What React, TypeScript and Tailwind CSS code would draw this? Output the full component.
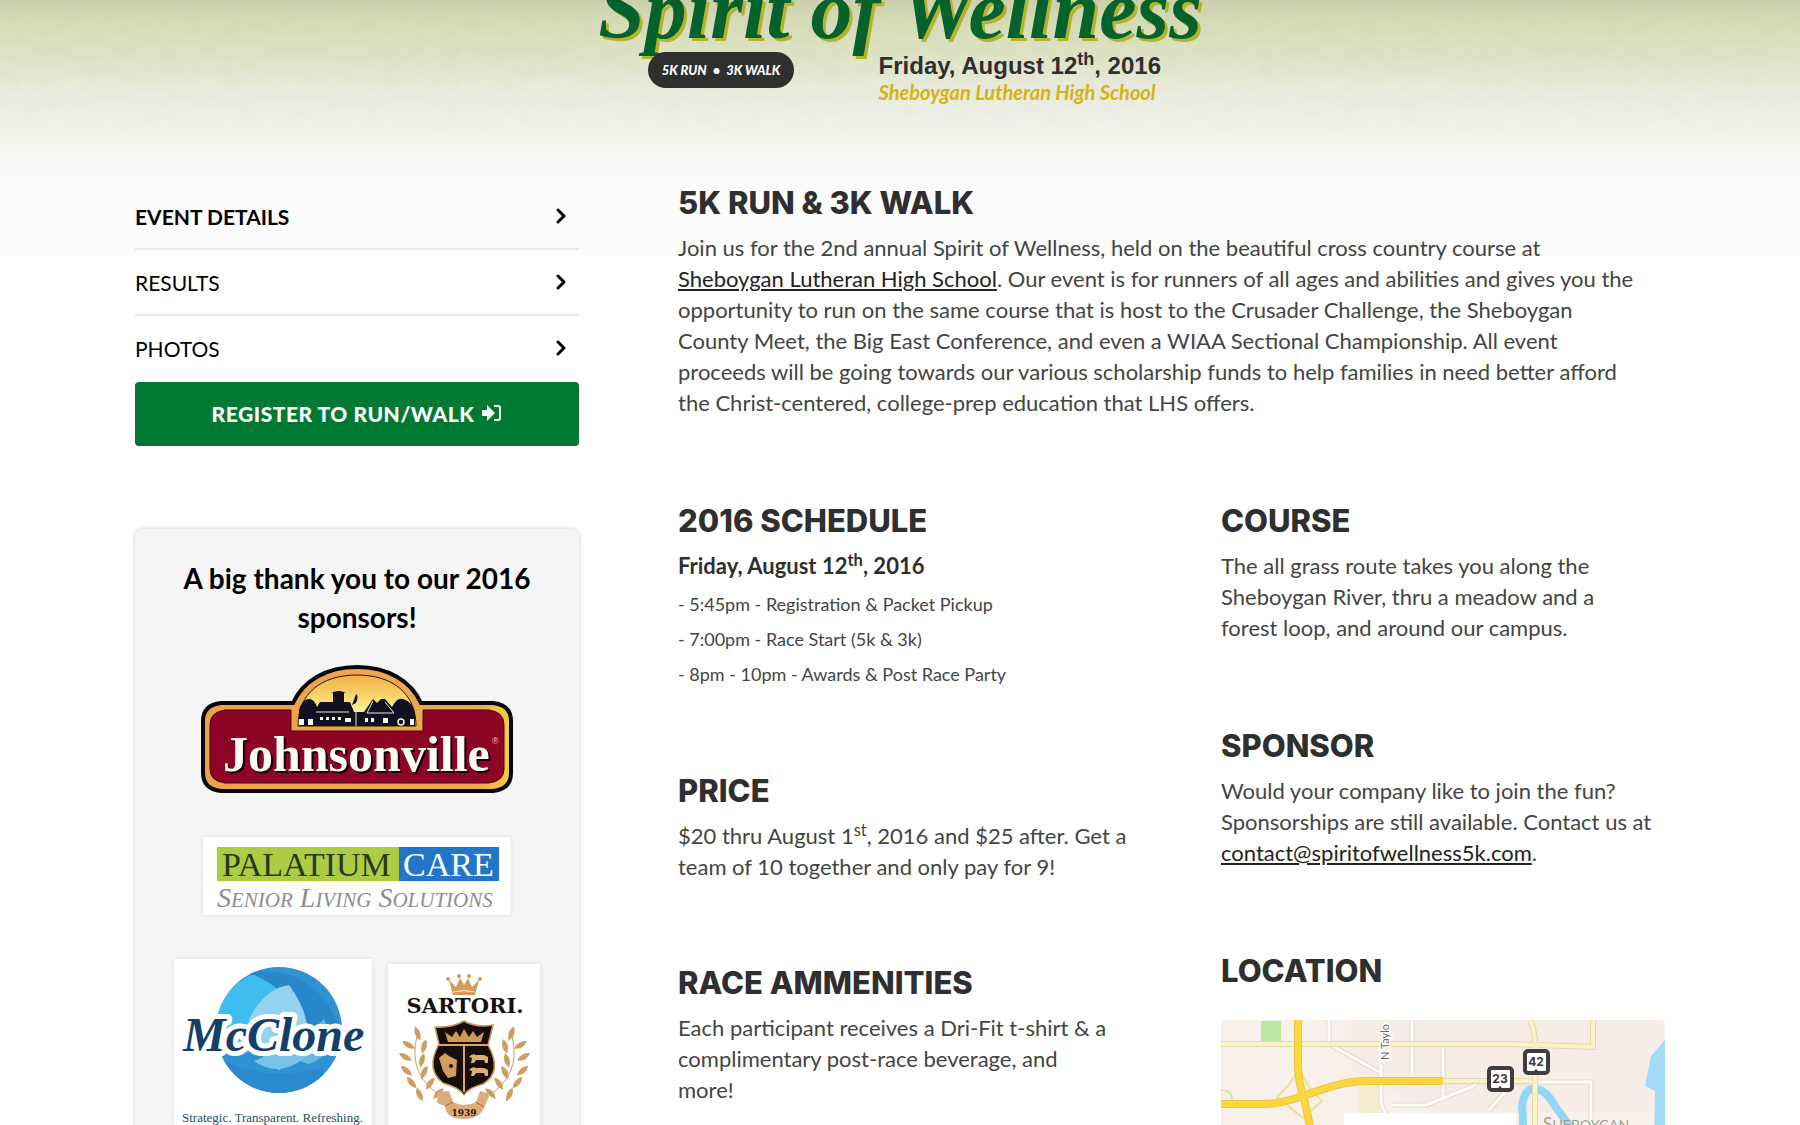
import React from "react";
import { ChevronRight } from "lucide-react";

const navItems = [
  { label: "EVENT DETAILS", active: true },
  { label: "RESULTS", active: false },
  { label: "PHOTOS", active: false },
];

const schedule = [
  "- 5:45pm - Registration & Packet Pickup",
  "- 7:00pm - Race Start (5k & 3k)",
  "- 8pm - 10pm - Awards & Post Race Party",
];

function Section({ title, children }: { title: string; children: React.ReactNode }) {
  return (
    <section>
      <h2 className="mb-2.5 font-['Inter'] text-[31px] leading-[38px] font-extrabold whitespace-nowrap text-[#2f2f2f]">{title}</h2>
      {children}
    </section>
  );
}

function HeaderTexture() {
  return (
    <svg aria-hidden="true" className="absolute inset-x-0 top-0 -z-10 h-[184px] w-full opacity-40">
      <defs>
        <filter id="paper" x="0" y="0" width="100%" height="100%">
          <feTurbulence type="fractalNoise" baseFrequency="0.05 0.09" numOctaves="4" seed="4" />
          <feColorMatrix values="0 0 0 0 0.62  0 0 0 0 0.65  0 0 0 0 0.45  1.8 0 0 0 -0.6" />
        </filter>
        <linearGradient id="paperFade" x1="0" y1="0" x2="0" y2="1">
          <stop offset="0" stopColor="#fff" />
          <stop offset="0.75" stopColor="#000" />
        </linearGradient>
        <mask id="paperMask">
          <rect width="100%" height="100%" fill="url(#paperFade)" />
        </mask>
      </defs>
      <g mask="url(#paperMask)">
        <rect width="100%" height="100%" filter="url(#paper)" />
      </g>
    </svg>
  );
}

function Header() {
  return (
    <header className="relative isolate flow-root h-[184px]">
      <div className="absolute inset-x-0 top-0 -z-20 h-64 bg-[linear-gradient(to_bottom,#cbcfac_0px,#d6dbb6_20px,#dce1bf_45px,#e4e7d0_72px,#eaebe0_90px,#f0f1e9_125px,#f6f7f0_155px,#f8f8f8_165px,#fcfcfc_190px,#fcfcfc_255px,#ffffff_256px)]" />
      <HeaderTexture />
      <div className="mx-auto w-[610px]">
        <p className="-mt-[29px] text-center font-['Liberation_Serif'] text-[84px] leading-[77px] font-bold whitespace-nowrap text-[#05622c] italic [text-shadow:3px_3px_0_#b3b32c]">
          Spirit of Wellness
        </p>
        <div className="flex justify-between pr-11 pl-[53px]">
          <p className="mt-1 flex h-9 w-[146px] items-center justify-center gap-1.5 rounded-full bg-[#2f302e] text-[13px] font-black text-white italic">
            <span>5K RUN</span>
            <span>•</span>
            <span>3K WALK</span>
          </p>
          <div className="whitespace-nowrap">
            <p className="font-['Liberation_Sans'] text-2xl leading-9 font-bold text-[#2f302e]">
              Friday, August 12<sup>th</sup>, 2016
            </p>
            <p className="text-xl leading-4 font-bold text-[#d2b410] italic">Sheboygan Lutheran High School</p>
          </div>
        </div>
      </div>
    </header>
  );
}

function JohnsonvilleLogo() {
  return (
    <svg role="img" aria-label="Johnsonville" viewBox="0 0 312 128" className="w-[312px]">
      <defs>
        <linearGradient id="sunrise" x1="0" y1="0" x2="0" y2="1">
          <stop offset="0" stopColor="#f2ae45" />
          <stop offset="0.7" stopColor="#fff08a" />
        </linearGradient>
        <linearGradient id="goldTrim" x1="0" y1="0" x2="1" y2="0">
          <stop offset="0" stopColor="#eda14b" />
          <stop offset="0.9" stopColor="#edaa50" />
          <stop offset="1" stopColor="#f6ce3e" />
        </linearGradient>
      </defs>
      <path
        d="M20 38H92C102 16 125 2 156 2S210 16 220 38H292Q310 40 310 56V108Q310 124 292 126H20Q2 124 2 108V56Q2 40 20 38Z"
        fill="url(#goldTrim)"
        stroke="#080808"
        strokeWidth="4"
      />
      <path
        d="M24 45H90V66H222V45H288Q303 47 303 60V104Q303 116 288 118H24Q9 116 9 104V60Q9 47 24 45Z"
        fill="#8e0426"
        stroke="#3b0712"
        strokeWidth="1"
      />
      <path d="M97 61C97 28 121 10 156 10S215 28 215 61Z" fill="url(#sunrise)" stroke="#26150c" strokeWidth="1" />
      <path
        d="M98 61V45Q101 35 107 34Q113 33 116 42L119 37H132V28H130Q138 24 145 28H143V37H149L153 47H163L172 34L176 38L180 34H184L191 42Q196 32 202 34Q211 36 214 48V61Z"
        fill="#101021"
      />
      <path
        d="M98 54h5v6h-5zM107 54h5v6h-5zM119 52h3v3h-3zM125 52h3v3h-3zM131 52h3v3h-3zM137 52h3v3h-3zM144 53h6v4h-6zM164 53h3v4h-3zM170 53h3v4h-3zM182 53h5v5h-5zM209 54h4v6h-4z"
        fill="#f7f5e8"
      />
      <path d="M155 29V61M115 47H148M172 36L166 48H193L184 37" stroke="#efe9d1" fill="none" strokeWidth="1" />
      <path d="M155 29q3 2 0 9l-4 2q3-8 4-11z" fill="#15131c" />
      <circle cx="200" cy="57" r="3" fill="none" stroke="#f7f5e8" strokeWidth="1.5" />
      <text x="22" y="106" fontFamily="Liberation Serif" fontWeight="700" fontSize="50" fill="#fffdf2" className="[filter:drop-shadow(2px_2px_0_#14060a)]">Johnsonville</text>
      <text x="291" y="79" fontFamily="Liberation Sans" fontSize="9" fill="#f0c3c7">®</text>
    </svg>
  );
}

function PalatiumLogo() {
  return (
    <svg role="img" aria-label="Palatium Care, Senior Living Solutions" viewBox="0 0 308 78" className="w-[308px] bg-white shadow-[0_0_4px_#dadada]">
      <rect x="14" y="10" width="182" height="34" fill="#adcc42" />
      <rect x="196" y="10" width="100" height="34" fill="#2176cb" />
      <text x="19" y="39" fontFamily="Liberation Serif" fontSize="34" fill="#29391d">PALATIUM</text>
      <text x="200" y="39" fontFamily="Liberation Serif" fontSize="34" fill="#fff">CARE</text>
      <g fontFamily="Liberation Serif" fontStyle="italic" fill="#8c8e91">
        <text x="14" y="70" fontSize="28">S<tspan fontSize="21">ENIOR</tspan> L<tspan fontSize="21">IVING</tspan> S<tspan fontSize="21">OLUTIONS</tspan></text>
      </g>
    </svg>
  );
}

function McCloneLogo() {
  return (
    <svg role="img" aria-label="McClone. Strategic. Transparent. Refreshing." viewBox="0 0 198 176" className="w-[198px] bg-white shadow-[0_0_4px_#dadada]">
      <defs>
        <clipPath id="globe"><circle cx="105" cy="71" r="63" /></clipPath>
      </defs>
      <g clipPath="url(#globe)">
        <rect x="40" y="6" width="130" height="130" fill="#2e93d3" />
        <path d="M40 60Q60 10 100 13Q135 28 140 60L100 90H40Z" fill="#3fbdef" />
        <path d="M75 14Q120 4 155 45L168 75Q150 92 132 66Q116 30 75 14Z" fill="#2788c9" />
        <path d="M75 60Q90 30 115 26Q140 60 132 92L105 111Q76 92 75 60Z" fill="#94d2ef" />
        <path d="M150 60Q165 95 135 105Q118 102 120 88Z" fill="#68b7e2" />
        <path d="M45 98Q90 125 150 108V140H45Z" fill="#2b8ace" />
        <path d="M80 102Q105 120 132 98L145 92L115 88Z" fill="#79c3e8" />
      </g>
      <text x="9" y="92" fontFamily="Liberation Serif" fontStyle="italic" fontWeight="700" fontSize="48" fill="#12406a" stroke="#fff" strokeWidth="10" strokeLinejoin="round" paintOrder="stroke">McClone</text>
      <text x="8" y="163" fontFamily="Liberation Serif" fontSize="13" fill="#264d70">Strategic. Transparent. Refreshing.</text>
    </svg>
  );
}

const leaves = [
  [123, 70, 20], [132, 81, 60], [117, 83, -15], [135, 93, 60], [119, 97, -15],
  [134, 107, 50], [117, 109, -25], [129, 119, 40], [111, 120, -35], [121, 131, 25], [103, 130, -45],
];

function Laurel() {
  return (
    <g fill="#cf9d5e">
      <path d="M124 72Q134 112 98 133" fill="none" stroke="#cf9d5e" strokeWidth="1" />
      {leaves.map(([x, y, turn]) => (
        <path key={`${x}-${y}`} d="M0 -8Q6 -1 0 7Q-5 -1 0 -8Z" transform={`translate(${x} ${y}) rotate(${turn})`} />
      ))}
    </g>
  );
}

function SartoriLogo() {
  return (
    <svg role="img" aria-label="Sartori, 1939" viewBox="0 0 152 166" className="w-[152px] bg-white shadow-[0_0_4px_#dadada]">
      <path d="M61 16L68 23L72 14L76 21L80 14L84 23L91 16L87 31H65Z" fill="#d69b58" />
      <g fill="#d69b58"><circle cx="60" cy="15" r="2" /><circle cx="71" cy="12" r="2" /><circle cx="81" cy="12" r="2" /><circle cx="92" cy="15" r="2" /></g>
      <path d="M65 28Q76 25 87 28" fill="none" stroke="#fff3e0" />
      <text x="77" y="49" textAnchor="middle" fontFamily="DejaVu Serif" fontWeight="700" fontSize="21" fill="#17110e">SARTORI.</text>
      <Laurel />
      <g transform="translate(153 0) scale(-1 1)"><Laurel /></g>
      <path d="M47 63Q64 64 76 57Q88 64 105 61L100 81Q115 108 95 120Q80 124 76 131Q72 124 55 119Q37 105 51 80Z" fill="#160e0b" stroke="#c99757" strokeWidth="1.5" />
      <path d="M51 81H101M76 82V128" stroke="#d7a566" strokeWidth="2" />
      <path d="M57 68L64 73L68 67L72 73L76 65L81 73L85 67L89 73L96 68L93 78H60Z" fill="#d19a54" />
      <path d="M51 94L57 89L61 92L69 96L68 112L60 114L55 107Z" fill="#d39e5c" />
      <circle cx="63" cy="102" r="2" fill="#160e0b" />
      <path d="M81 93q3-4 7-2h8l4 2v6h-3l-1-3h-8l-2 3h-3l1-5zM81 106q3-4 7-2h8l4 2v6h-3l-1-3h-8l-2 3h-3l1-5z" fill="#dfad70" />
      <path d="M50 128L61 127L65 138Q76 144 88 138L92 127L102 130L96 144Q91 155 76 155Q58 155 57 142L49 139Z" fill="#dbad7a" />
      <path d="M57 142L65 138M96 143L88 138" stroke="#976a3d" />
      <text x="76" y="152" textAnchor="middle" fontFamily="DejaVu Serif" fontWeight="700" fontSize="9" fill="#2a180d">1939</text>
    </svg>
  );
}

function RouteMarker({ x, y, label }: { x: number; y: number; label: string }) {
  return (
    <g transform={`translate(${x} ${y})`}>
      <rect x="-11" y="-11" width="23" height="22" rx="3" fill="#fff" stroke="#3f3d3d" strokeWidth="4" />
      <path d="M-4 11L0 7L4 11" fill="#3f3d3d" />
      <text y="4" textAnchor="middle" fontFamily="Inter" fontWeight="700" fontSize="12" fill="#3a3838">{label}</text>
    </g>
  );
}

function LocationMap() {
  return (
    <svg role="img" aria-label="Map of Sheboygan" viewBox="0 0 444 300" className="mt-[30px] w-full rounded-sm bg-[#f8f1ea]">
      <path d="M130 0H444V92H210L130 50Z" fill="#f6ede7" />
      <path d="M40 1H60V21H40Z" fill="#bde5a3" />
      <path d="M138 60H158V94H138Z" fill="#f6eeca" />
      <path d="M444 20L430 36L424 66L434 71L430 300H444Z" fill="#a3daf5" />
      <g fill="none" stroke="#dfd9d1" strokeWidth="5">
        <path d="M108 0V24L160 53M191 0V53M222 28V80M160 44V82Q162 95 174 100M222 62H370V105M255 65L205 85H172M288 68L268 90" />
      </g>
      <g fill="none" stroke="#fffdfa" strokeWidth="3">
        <path d="M108 0V24L160 53M191 0V53M222 28V80M160 44V82Q162 95 174 100M222 62H370V105M255 65L205 85H172M288 68L268 90" />
      </g>
      <path d="M298 140Q304 104 301 88Q303 68 313 69Q324 68 334 86L350 108" fill="none" stroke="#94d7f5" strokeWidth="8" />
      <g fill="none" stroke="#e2daad" strokeWidth="6">
        <path d="M0 24H290L372 27V0M309 0Q315 14 314 28V300M222 61H310" />
      </g>
      <g fill="none" stroke="#fbf3c8" strokeWidth="4">
        <path d="M0 24H290L372 27V0M309 0Q315 14 314 28V300M222 61H310" />
      </g>
      <g fill="none" stroke="#eadf9f" strokeWidth="2">
        <path d="M0 70Q11 70 11 80M77 48Q72 63 56 77L82 98L101 81Q84 65 79 48" />
      </g>
      <g fill="none" stroke="#e9c648" strokeWidth="8">
        <path d="M0 84H45C78 83 107 61 146 61H222M77 0V45Q77 61 83 78L94 130L120 300" />
      </g>
      <g fill="none" stroke="#fad73a" strokeWidth="6">
        <path d="M0 84H45C78 83 107 61 146 61H222M77 0V45Q77 61 83 78L94 130L120 300" />
      </g>
      <text x="168" y="40" transform="rotate(-90 168 40)" fontFamily="Lato" fontSize="11" fill="#6b6966" stroke="#fff" strokeWidth="3" paintOrder="stroke">N Taylo</text>
      <RouteMarker x={315} y={42} label="42" />
      <RouteMarker x={279} y={59} label="23" />
      <text x="322" y="110" fontFamily="Lato" fontSize="17" fill="#a49f98">S<tspan fontSize="14">HEBOYGAN</tspan></text>
      <rect x="123" y="93" width="172" height="60" fill="#fff" />
      <text x="138" y="112" fontFamily="Lato" fontSize="10" fill="#5f5d5b">Sheboygan Lutheran High School</text>
    </svg>
  );
}

function Sidebar() {
  return (
    <div>
      <nav>
        <ul>
          {navItems.map((item) => (
            <li key={item.label} className="border-b-2 border-[#e8e8e8] last:border-transparent">
              <a
                href="#"
                aria-current={item.active ? "page" : undefined}
                className={`flex h-16 items-center justify-between pr-1.5 text-[21px] text-black ${item.active ? "font-bold" : "font-normal"}`}
              >
                {item.label}
                <ChevronRight className="size-6" strokeWidth={3} />
              </a>
            </li>
          ))}
        </ul>
      </nav>
      <a
        href="#"
        className="flex h-16 items-center justify-center gap-2 rounded-sm border-b-2 border-[#13693a] bg-[#007a33] text-[21px] font-black tracking-wide text-white"
      >
        REGISTER TO RUN/WALK
        <svg aria-hidden="true" viewBox="0 0 20 18" className="w-5">
          <path d="M0 6H5V1L13 9L5 17V12H0Z" fill="currentColor" />
          <path d="M12 2H16Q18 2 18 4V14Q18 16 16 16H12" fill="none" stroke="currentColor" strokeWidth="2" />
        </svg>
      </a>
      <aside className="mt-[83px] rounded-lg bg-[#f5f5f5] px-9 pt-[30px] pb-10 shadow-[0_0_4px_#c9c9c9]">
        <h3 className="text-center text-[28px] leading-[39px] font-bold text-black">
          A big thank you to our 2016 sponsors!
        </h3>
        <div className="mt-7 flex flex-col items-center gap-11">
          <JohnsonvilleLogo />
          <PalatiumLogo />
          <div className="flex items-center gap-4">
            <McCloneLogo />
            <SartoriLogo />
          </div>
        </div>
      </aside>
    </div>
  );
}

export default function App() {
  return (
    <div className="min-h-screen bg-white font-['Lato',sans-serif] text-[22px] leading-[31px] text-[#444]">
      <Header />
      <div className="relative mx-auto grid w-[85%] grid-cols-3 gap-x-[99px]">
        <Sidebar />
        <main className="col-span-2 flex flex-col gap-[84px]">
          <Section title="5K RUN & 3K WALK">
            <p>
              Join us for the 2nd annual Spirit of Wellness, held on the beautiful cross country course at
              <br />
              <a href="#" className="text-[#222] underline">Sheboygan Lutheran High School</a>. Our event is for runners of
              all ages and abilities and gives you the
              <br />
              opportunity to run on the same course that is host to the Crusader Challenge, the Sheboygan
              <br />
              County Meet, the Big East Conference, and even a WIAA Sectional Championship. All event
              <br />
              proceeds will be going towards our various scholarship funds to help families in need better afford
              <br />
              the Christ-centered, college-prep education that LHS offers.
            </p>
          </Section>
          <div className="grid grid-cols-2 gap-x-[99px]">
            <div className="flex flex-col gap-[82px]">
              <Section title="2016 SCHEDULE">
                <p className="mb-2 font-bold text-[#2f2f2f]">Friday, August 12<sup>th</sup>, 2016</p>
                <ul className="flex flex-col gap-1 text-lg leading-[31px]">
                  {schedule.map((entry) => <li key={entry}>{entry}</li>)}
                </ul>
              </Section>
              <Section title="PRICE">
                <p className="whitespace-nowrap">
                  $20 thru August 1<sup>st</sup>, 2016 and $25 after. Get a<br />
                  team of 10 together and only pay for 9!
                </p>
              </Section>
              <Section title="RACE AMMENITIES">
                <p>
                  Each participant receives a Dri-Fit t-shirt &amp; a complimentary post-race beverage, and
                  <br />
                  more!
                </p>
              </Section>
            </div>
            <div className="flex flex-col gap-[84px]">
              <Section title="COURSE">
                <p>
                  The all grass route takes you along the Sheboygan River, thru a meadow and a
                  <br />
                  forest loop, and around our campus.
                </p>
              </Section>
              <Section title="SPONSOR">
                <p>
                  Would your company like to join the fun? Sponsorships are still available. Contact us at{" "}
                  <a href="#" className="text-[#222] underline">contact@spiritofwellness5k.com</a>.
                </p>
              </Section>
              <Section title="LOCATION">
                <LocationMap />
              </Section>
            </div>
          </div>
        </main>
      </div>
    </div>
  );
}
